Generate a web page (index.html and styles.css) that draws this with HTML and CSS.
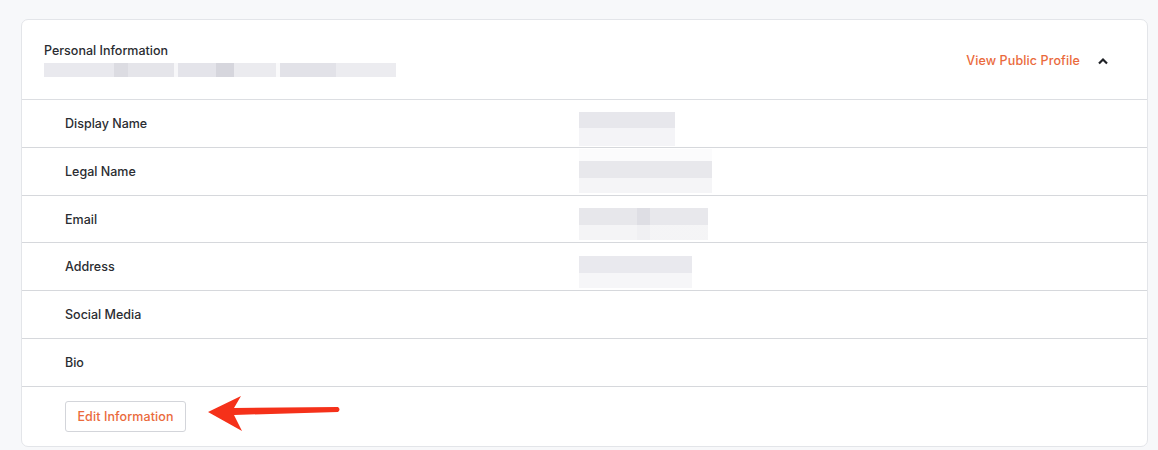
FILE: index.html
```html
<!DOCTYPE html>
<html>
<head>
<meta charset="utf-8">
<link rel="stylesheet" href="styles.css">
</head>
<body>
<div class="card">
  <div class="card-head">
    <div class="head-left">
      <div class="title">Personal Information</div>
      <div class="blur blur-sub"></div>
    </div>
    <div class="head-right">
      <a class="link">View Public Profile</a>
      <svg class="chev" width="12" height="8" viewBox="0 0 12 8"><path d="M2 6.5 L6 2.5 L10 6.5" fill="none" stroke="#1f2126" stroke-width="2.2"/></svg>
    </div>
  </div>
  <div class="rows">
    <div class="row"><div class="label">Display Name</div><div class="value"><div class="blur b1"></div></div></div>
    <div class="row"><div class="label">Legal Name</div><div class="value"><div class="blur b2"></div></div></div>
    <div class="row"><div class="label">Email</div><div class="value"><div class="blur b3"></div></div></div>
    <div class="row"><div class="label">Address</div><div class="value"><div class="blur b4"></div></div></div>
    <div class="row"><div class="label">Social Media</div><div class="value"></div></div>
    <div class="row"><div class="label">Bio</div><div class="value"></div></div>
  </div>
  <div class="card-foot">
    <button class="btn">Edit Information</button>
    <svg class="arrow" width="134" height="40" viewBox="0 0 134 40">
      <path d="M1 18 L34 2 L27 14 L131 13 Q134 15.5 131 18 L27 21 L35 37 Z" fill="#f5311a"/>
    </svg>
  </div>
</div>
</body>
</html>
```
FILE: styles.css
```css
html, body { margin: 0; padding: 0; }
body {
  background: #f7f8fa;
  font-family: Inter, "Noto Sans", sans-serif;
  color: #2a2c31;
  padding: 19px 10px 0 21px;
  height: 450px;
  box-sizing: border-box;
  overflow: hidden;
}
.card {
  background: #fff;
  border: 1px solid #e3e5e9;
  border-radius: 7px;
  height: 428px;
  box-sizing: border-box;
  overflow: hidden;
}
.card-head {
  height: 80px;
  box-sizing: border-box;
  border-bottom: 1px solid #dcdee2;
  display: flex;
  justify-content: space-between;
  align-items: flex-start;
  padding: 23px 38px 0 22px;
}
.title { font-size: 12.5px; line-height: 16px; font-weight: 500; color: #2a2c31; }
.blur { background: #e6e6eb; }
.blur-sub {
  margin-top: 4px;
  width: 352px; height: 14px;
  background: linear-gradient(90deg, #e9e9ee 0 20%, #dcdce2 20% 24%, #e5e5ea 24% 37%, #f7f7f9 37% 38%, #e4e4ea 38% 49%, #d6d6dd 49% 54%, #ebebef 54% 66%, #fafafb 66% 67%, #e2e2e8 67% 83%, #ececf0 83% 100%);
}
.head-right { display: flex; align-items: center; gap: 17px; padding-top: 10px; }
.link { color: #ea6a3c; font-size: 12.5px; font-weight: 500; line-height: 16px; letter-spacing: 0.12px; }
.chev { display: block; }
.row {
  height: 47.83px;
  box-sizing: border-box;
  border-bottom: 1px solid #d6d8dc;
  display: flex;
  align-items: center;
}
.label { width: 514px; padding-left: 43px; font-size: 12.5px; font-weight: 500; color: #2a2c31; }
.value { flex: 1; }
.b1 { width: 96px; height: 34px; margin-top: 12px; background: linear-gradient(180deg, #e7e7ec 0 48%, #f4f4f7 48% 100%); }
.b2 { width: 133px; height: 44px; background: linear-gradient(180deg, #fbfbfc 0 27%, #e8e8ec 27% 66%, #f5f5f7 66% 100%); }
.b3 { width: 129px; height: 32px; margin-top: 10px; background: linear-gradient(180deg, transparent 0 53%, rgba(255,255,255,0.55) 53% 100%), linear-gradient(90deg, #e7e7eb 0 45%, #dedee4 45% 55%, #e8e8ec 55% 100%); }
.b4 { width: 113px; height: 32px; margin-top: 11px; background: linear-gradient(180deg, #e9e9ee 0 53%, #f6f6f8 53% 100%); }
.card-foot {
  display: flex;
  align-items: center;
  gap: 22px;
  padding: 13px 0 0 43px;
}
.btn {
  height: 31px;
  width: 121px;
  padding: 0;
  background: #fff;
  border: 1px solid #d3d5da;
  border-radius: 3px;
  color: #ea6a3c;
  font-family: Inter, "Noto Sans", sans-serif;
  font-size: 12.5px;
  font-weight: 500;
  letter-spacing: 0.1px;
}
.arrow { display: block; margin-left: -1px; margin-top: -6px; }
```
